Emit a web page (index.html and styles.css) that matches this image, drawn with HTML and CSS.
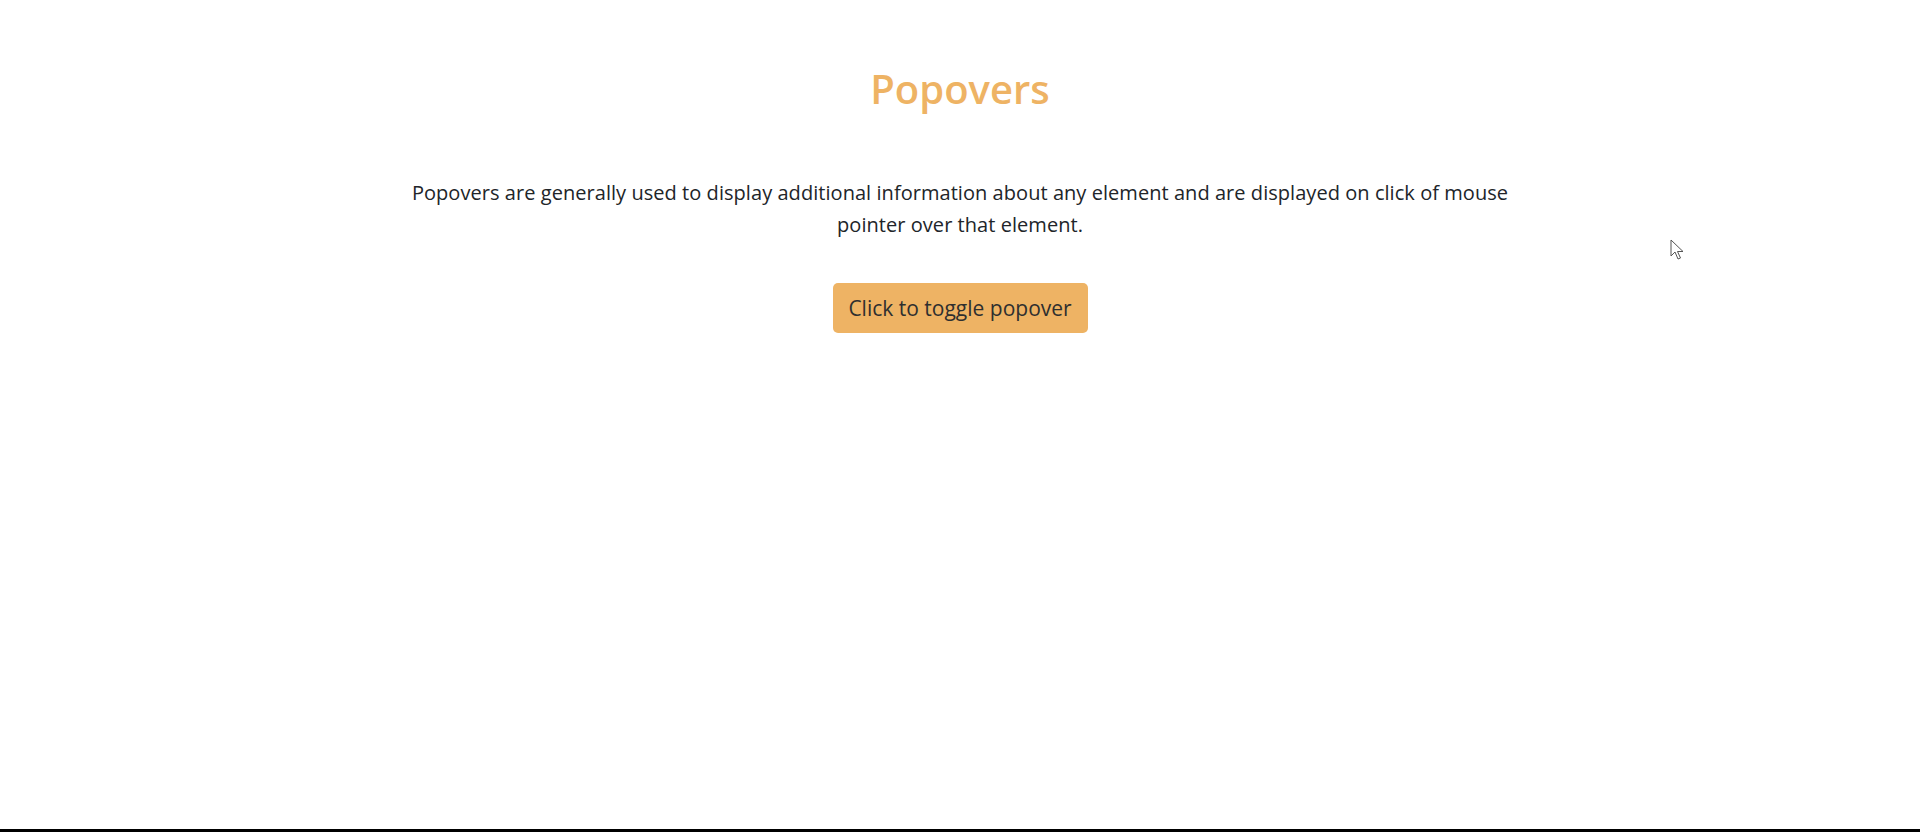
FILE: index.html
```html
<!DOCTYPE html>
<html lang="en">
<head>
<meta charset="utf-8">
<title>Popovers</title>
<link rel="stylesheet" href="styles.css">
</head>
<body>
<main class="container">
  <h1 class="title">Popovers</h1>
  <p class="lead">Popovers are generally used to display additional information about any element and are displayed on click of mouse pointer over that element.</p>
  <button class="btn" type="button">Click to toggle popover</button>
</main>
<svg class="cursor" width="14" height="22" viewBox="0 0 14 22" aria-hidden="true">
  <path d="M1 1 L1 17 L5 13 L8 20 L10.5 19 L7.5 12.5 L13 12.5 Z" fill="#fff" stroke="#555" stroke-width="1" stroke-linejoin="miter"/>
</svg>
<div class="bottom-line"></div>
</body>
</html>
```
FILE: styles.css
```css
html, body {
  margin: 0;
  padding: 0;
  height: 100%;
  background: #fff;
}
body {
  font-family: "Open Sans", "Noto Sans", sans-serif;
  color: #212529;
  position: relative;
  overflow: hidden;
}
.container {
  width: 1110px;
  margin: 0 auto;
  padding-top: 62px;
  display: flex;
  flex-direction: column;
  align-items: center;
  text-align: center;
}
.title {
  margin: 0;
  font-size: 40px;
  font-weight: 600;
  line-height: 54px;
  color: #eeb364;
}
.lead {
  margin: 61px 0 0;
  font-size: 20px;
  line-height: 32px;
  letter-spacing: 0.05px;
}
.btn {
  margin-top: 42px;
  width: 255px;
  height: 50px;
  border: 0;
  border-radius: 5px;
  background: #eeb364;
  color: #2f2f2f;
  font-family: inherit;
  font-size: 21px;
  padding: 0;
}
.cursor {
  position: absolute;
  left: 1670px;
  top: 239px;
}
.bottom-line {
  position: absolute;
  left: 0;
  right: 0;
  bottom: 0;
  height: 3px;
  background: #000;
}
```
